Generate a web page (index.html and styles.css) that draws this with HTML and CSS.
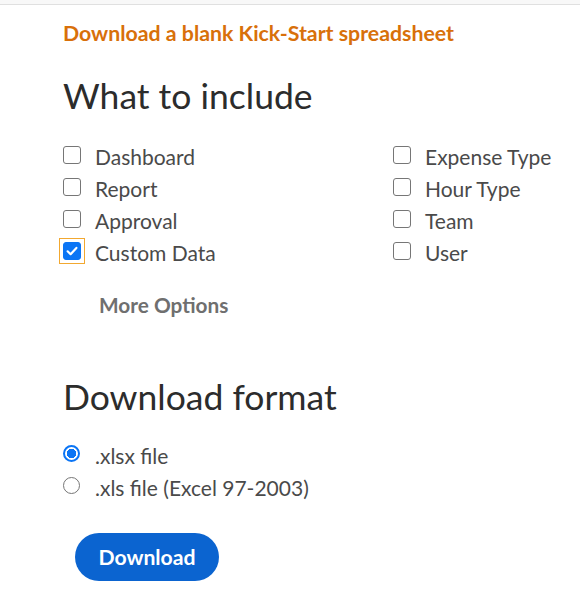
FILE: index.html
```html
<!DOCTYPE html>
<html>
<head>
<meta charset="utf-8">
<link rel="stylesheet" href="styles.css">
</head>
<body>
<div class="topbar"></div>
<main class="content">
  <a class="blank-link" href="#">Download a blank Kick-Start spreadsheet</a>
  <h2 class="section-title">What to include</h2>
  <div class="options-grid">
    <div class="col">
      <label class="opt"><span class="box"></span><span class="lbl">Dashboard</span></label>
      <label class="opt"><span class="box"></span><span class="lbl">Report</span></label>
      <label class="opt"><span class="box"></span><span class="lbl">Approval</span></label>
      <label class="opt"><span class="box checked"><svg viewBox="0 0 16 16" width="16" height="16"><path d="M3.6 8.3 L6.6 11.2 L12.4 4.9" fill="none" stroke="#fff" stroke-width="2.2" stroke-linecap="round" stroke-linejoin="round"/></svg></span><span class="lbl">Custom Data</span></label>
    </div>
    <div class="col">
      <label class="opt"><span class="box"></span><span class="lbl">Expense Type</span></label>
      <label class="opt"><span class="box"></span><span class="lbl">Hour Type</span></label>
      <label class="opt"><span class="box"></span><span class="lbl">Team</span></label>
      <label class="opt"><span class="box"></span><span class="lbl">User</span></label>
    </div>
  </div>
  <div class="more">More Options</div>
  <h2 class="section-title format-title">Download format</h2>
  <div class="radios">
    <label class="opt"><span class="radio checked"></span><span class="lbl">.xlsx file</span></label>
    <label class="opt"><span class="radio"></span><span class="lbl">.xls file (Excel 97-2003)</span></label>
  </div>
  <button class="download-btn">Download</button>
</main>
</body>
</html>
```
FILE: styles.css
```css
html, body {
  margin: 0;
  padding: 0;
  background: #fff;
}
body {
  font-family: "Lato", "Liberation Sans", sans-serif;
  color: #2c2c2c;
}
.topbar {
  height: 4px;
  background: #f8f8f8;
  border-bottom: 1px solid #e0e0e0;
}
.content {
  padding: 16px 0 0 63px;
  display: flex;
  flex-direction: column;
  align-items: flex-start;
}
.blank-link {
  font-size: 21.3px;
  font-weight: 700;
  color: #d8700a;
  text-decoration: none;
  line-height: 24px;
}
.section-title {
  margin: 31px 0 0 0;
  font-size: 35.5px;
  font-weight: 400;
  line-height: 40px;
  color: #2c2c2c;
}
.options-grid {
  margin-top: 25px;
  display: grid;
  grid-template-columns: 330px auto;
}
.col {
  display: flex;
  flex-direction: column;
}
.opt {
  display: flex;
  align-items: center;
  height: 32px;
}
.box {
  width: 18px;
  height: 18px;
  box-sizing: border-box;
  border: 1.5px solid #767676;
  border-radius: 3px;
  margin: 0 14px 5px 0;
  position: relative;
  display: flex;
  align-items: center;
  justify-content: center;
}
.box.checked {
  background: #0b75f5;
  border-color: #0b75f5;
}
.box.checked::after {
  content: "";
  position: absolute;
  left: -5px;
  top: -5px;
  right: -5px;
  bottom: -5px;
  border: 1.5px solid #f2a830;
}
.lbl {
  font-size: 21px;
  line-height: 24px;
  color: #4a4a4a;
}
.more {
  margin: 24px 0 0 36px;
  font-size: 20.8px;
  line-height: 24px;
  font-weight: 700;
  color: #6f6f6f;
}
.format-title {
  margin-top: 60px;
}
.radios {
  margin-top: 23px;
  display: flex;
  flex-direction: column;
}
.radio {
  width: 17px;
  height: 17px;
  box-sizing: border-box;
  border: 1.5px solid #767676;
  border-radius: 50%;
  margin: 0 15px 5px 0;
}
.radio.checked {
  border: 2px solid #0b75f5;
  background: radial-gradient(circle, #0b75f5 0 4.6px, #fff 5px);
}
.download-btn {
  margin: 29px 0 0 12px;
  width: 144px;
  height: 48px;
  border: none;
  border-radius: 24px;
  background: #0b64d0;
  color: #fff;
  font-family: inherit;
  font-size: 21.2px;
  font-weight: 700;
  cursor: pointer;
}
```
